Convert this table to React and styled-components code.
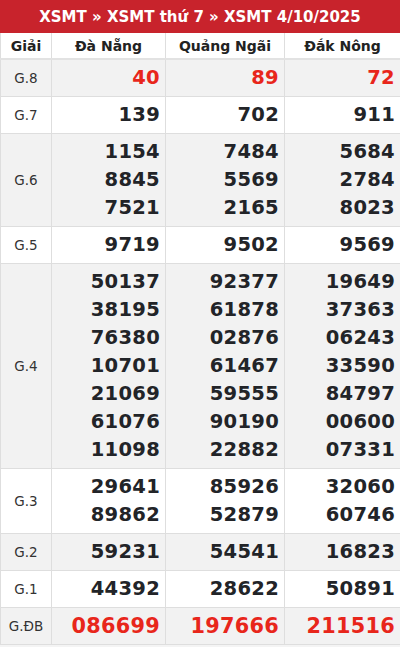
import React from 'react'
import styled, { createGlobalStyle } from 'styled-components'

const Global = createGlobalStyle`
    body {
        margin: 0;
        background: #f4f4f4;
        font-family: "DejaVu Sans", "Noto Sans", sans-serif;
    }
`

const Wrapper = styled.div`
    width: 400px;
    background: #fff;
`

const Title = styled.h1`
    margin: 0;
    height: 33px;
    display: flex;
    align-items: center;
    justify-content: center;
    background: #c8232c;
    color: #fff;
    font-size: 15px;
    font-weight: bold;
`

const Table = styled.table`
    width: 100%;
    border-collapse: collapse;
    table-layout: fixed;
`

const Head = styled.th`
    height: 25px;
    padding: 0;
    font-size: 14px;
    font-weight: bold;
    color: #222;
    background: #fff;
    border: 1px solid #dedede;
    border-top: none;
    border-bottom: 2px solid #e2e2e2;
`

const Row = styled.tr`
    background: ${props => props.odd ? "#f2f2f2" : "#fff"};
`

const Label = styled.td`
    padding: 0;
    text-align: center;
    font-size: 13.5px;
    color: #333;
    border: 1px solid #dedede;
`

const Cell = styled.td`
    padding: 4px 5px 4px 0;
    text-align: right;
    vertical-align: middle;
    border: 1px solid #dedede;
`

const Num = styled.div`
    line-height: 28px;
    font-size: ${props => props.big ? "20.8px" : "19.5px"};
    font-weight: bold;
    letter-spacing: 0.3px;
    color: ${props => props.red ? "#e8261b" : "#222428"};
`

const rows = [
    { label: "G.8", red: true, cols: [["40"], ["89"], ["72"]] },
    { label: "G.7", cols: [["139"], ["702"], ["911"]] },
    { label: "G.6", cols: [["1154", "8845", "7521"], ["7484", "5569", "2165"], ["5684", "2784", "8023"]] },
    { label: "G.5", cols: [["9719"], ["9502"], ["9569"]] },
    {
        label: "G.4", cols: [
            ["50137", "38195", "76380", "10701", "21069", "61076", "11098"],
            ["92377", "61878", "02876", "61467", "59555", "90190", "22882"],
            ["19649", "37363", "06243", "33590", "84797", "00600", "07331"],
        ]
    },
    { label: "G.3", cols: [["29641", "89862"], ["85926", "52879"], ["32060", "60746"]] },
    { label: "G.2", cols: [["59231"], ["54541"], ["16823"]] },
    { label: "G.1", cols: [["44392"], ["28622"], ["50891"]] },
    { label: "G.ĐB", red: true, big: true, cols: [["086699"], ["197666"], ["211516"]] },
]

export default function App() {
    return (
        <Wrapper>
            <Global />
            <Title>XSMT » XSMT thứ 7 » XSMT 4/10/2025</Title>
            <Table>
                <colgroup>
                    <col style={{ width: 51 }} />
                    <col style={{ width: 114 }} />
                    <col style={{ width: 119 }} />
                    <col style={{ width: 116 }} />
                </colgroup>
                <thead>
                    <tr>
                        <Head>Giải</Head>
                        <Head>Đà Nẵng</Head>
                        <Head>Quảng Ngãi</Head>
                        <Head>Đắk Nông</Head>
                    </tr>
                </thead>
                <tbody>
                    {rows.map((r, i) => (
                        <Row key={r.label} odd={i % 2 === 0}>
                            <Label>{r.label}</Label>
                            {r.cols.map((c, j) => (
                                <Cell key={j}>
                                    {c.map((n, k) => <Num key={k} red={r.red} big={r.big}>{n}</Num>)}
                                </Cell>
                            ))}
                        </Row>
                    ))}
                </tbody>
            </Table>
        </Wrapper>
    )
}
